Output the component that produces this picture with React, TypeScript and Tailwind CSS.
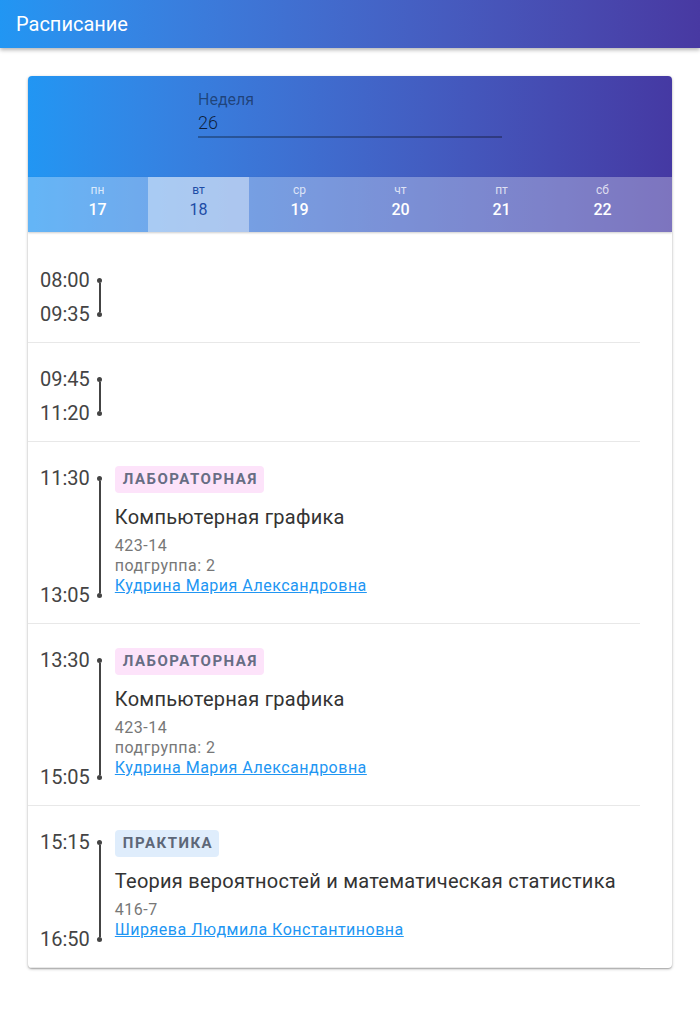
import React from "react";

type Lesson = {
  start: string;
  end: string;
  kind?: "lab" | "practice";
  title?: string;
  room?: string;
  subgroup?: string;
  teacher?: string;
};

const lessons: Lesson[] = [
  { start: "08:00", end: "09:35" },
  { start: "09:45", end: "11:20" },
  {
    start: "11:30",
    end: "13:05",
    kind: "lab",
    title: "Компьютерная графика",
    room: "423-14",
    subgroup: "подгруппа: 2",
    teacher: "Кудрина Мария Александровна",
  },
  {
    start: "13:30",
    end: "15:05",
    kind: "lab",
    title: "Компьютерная графика",
    room: "423-14",
    subgroup: "подгруппа: 2",
    teacher: "Кудрина Мария Александровна",
  },
  {
    start: "15:15",
    end: "16:50",
    kind: "practice",
    title: "Теория вероятностей и математическая статистика",
    room: "416-7",
    teacher: "Ширяева Людмила Константиновна",
  },
];

const days = [
  { name: "пн", num: 17 },
  { name: "вт", num: 18 },
  { name: "ср", num: 19 },
  { name: "чт", num: 20 },
  { name: "пт", num: 21 },
  { name: "сб", num: 22 },
];

function Chip({ kind }: { kind: "lab" | "practice" }) {
  if (kind === "lab") {
    return (
      <span className="inline-flex h-[27px] items-center rounded bg-[#fde3fa] pl-2 pr-[6px] text-[15px] font-bold tracking-[1.5px] text-[#676d84]">
        ЛАБОРАТОРНАЯ
      </span>
    );
  }
  return (
    <span className="inline-flex h-[27px] items-center rounded bg-[#dfedfc] pl-2 pr-[6px] text-[15px] font-bold tracking-[1.5px] text-[#5d6778]">
      ПРАКТИКА
    </span>
  );
}

function LessonRow({ lesson }: { lesson: Lesson }) {
  return (
    <div className="flex border-b border-[#e8e8e8] pl-3 pt-6 pb-4">
      <div className="flex min-h-[58px] flex-col justify-between text-[20px] leading-6 text-[#444]">
        <span>{lesson.start}</span>
        <span>{lesson.end}</span>
      </div>
      <div className="flex w-5 flex-col items-center py-[9.5px]">
        <div className="h-[5px] w-[5px] rounded-full bg-[#444]" />
        <div className="w-[2px] flex-1 bg-[#444]" />
        <div className="h-[5px] w-[5px] rounded-full bg-[#444]" />
      </div>
      {lesson.kind && (
        <div className="ml-[5px] flex flex-col items-start pb-[11px]">
          <Chip kind={lesson.kind} />
          <div className="mt-[10px] text-[20px] leading-7 tracking-[0.25px] text-[#333]">{lesson.title}</div>
          <div className="mt-[5px] text-[16px] leading-5 tracking-[0.5px] text-[#777]">{lesson.room}</div>
          {lesson.subgroup && (
            <div className="text-[16px] leading-5 tracking-[0.5px] text-[#777]">{lesson.subgroup}</div>
          )}
          <a href="#" className="text-[16px] leading-5 tracking-[0.5px] text-[#2196f3] underline">
            {lesson.teacher}
          </a>
        </div>
      )}
    </div>
  );
}

export default function App() {
  return (
    <div className="min-h-[1011px] bg-white font-['Roboto',sans-serif]">
      <header className="flex h-12 items-center bg-gradient-to-r from-[#2196f3] to-[#4839a2] px-4 shadow-[0_2px_4px_rgba(0,0,0,0.3)]">
        <h1 className="text-[20px] font-normal text-white">Расписание</h1>
      </header>

      <main className="px-7 pt-7">
        <div className="overflow-hidden rounded bg-white shadow-[0_1px_3px_rgba(0,0,0,0.3),0_1px_1px_rgba(0,0,0,0.14)]">
          <div className="bg-gradient-to-r from-[#2196f3] to-[#4539a3]">
            <div className="h-[101px] pt-[14px]">
              <div className="mx-auto w-[304px]">
                <div className="text-[16px] leading-5 text-black/45">Неделя</div>
                <div className="mt-[1px] border-b-2 border-black/30 pb-[1px] text-[18px] font-light leading-6 text-black/75">
                  26
                </div>
              </div>
            </div>
            <div className="flex h-[55px] bg-white/30 px-[19px] shadow-[0_1px_2px_rgba(0,0,0,0.2)]">
              {days.map((d) => {
                const active = d.num === 18;
                return (
                  <div
                    key={d.num}
                    className={
                      active
                        ? "flex w-[101px] flex-col items-center bg-white/40 pt-[5px] text-[#1d4ca6]"
                        : "flex w-[101px] flex-col items-center pt-[5px] text-white"
                    }
                  >
                    <span className={active ? "text-[12px] leading-4" : "text-[12px] leading-4 text-white/75"}>
                      {d.name}
                    </span>
                    <span className={active ? "text-[16px] leading-6" : "text-[16px] font-medium leading-6"}>
                      {d.num}
                    </span>
                  </div>
                );
              })}
            </div>
          </div>

          <div className="pr-8 pt-3">
            {lessons.map((l, i) => (
              <LessonRow key={i} lesson={l} />
            ))}
          </div>
        </div>
      </main>
    </div>
  );
}
